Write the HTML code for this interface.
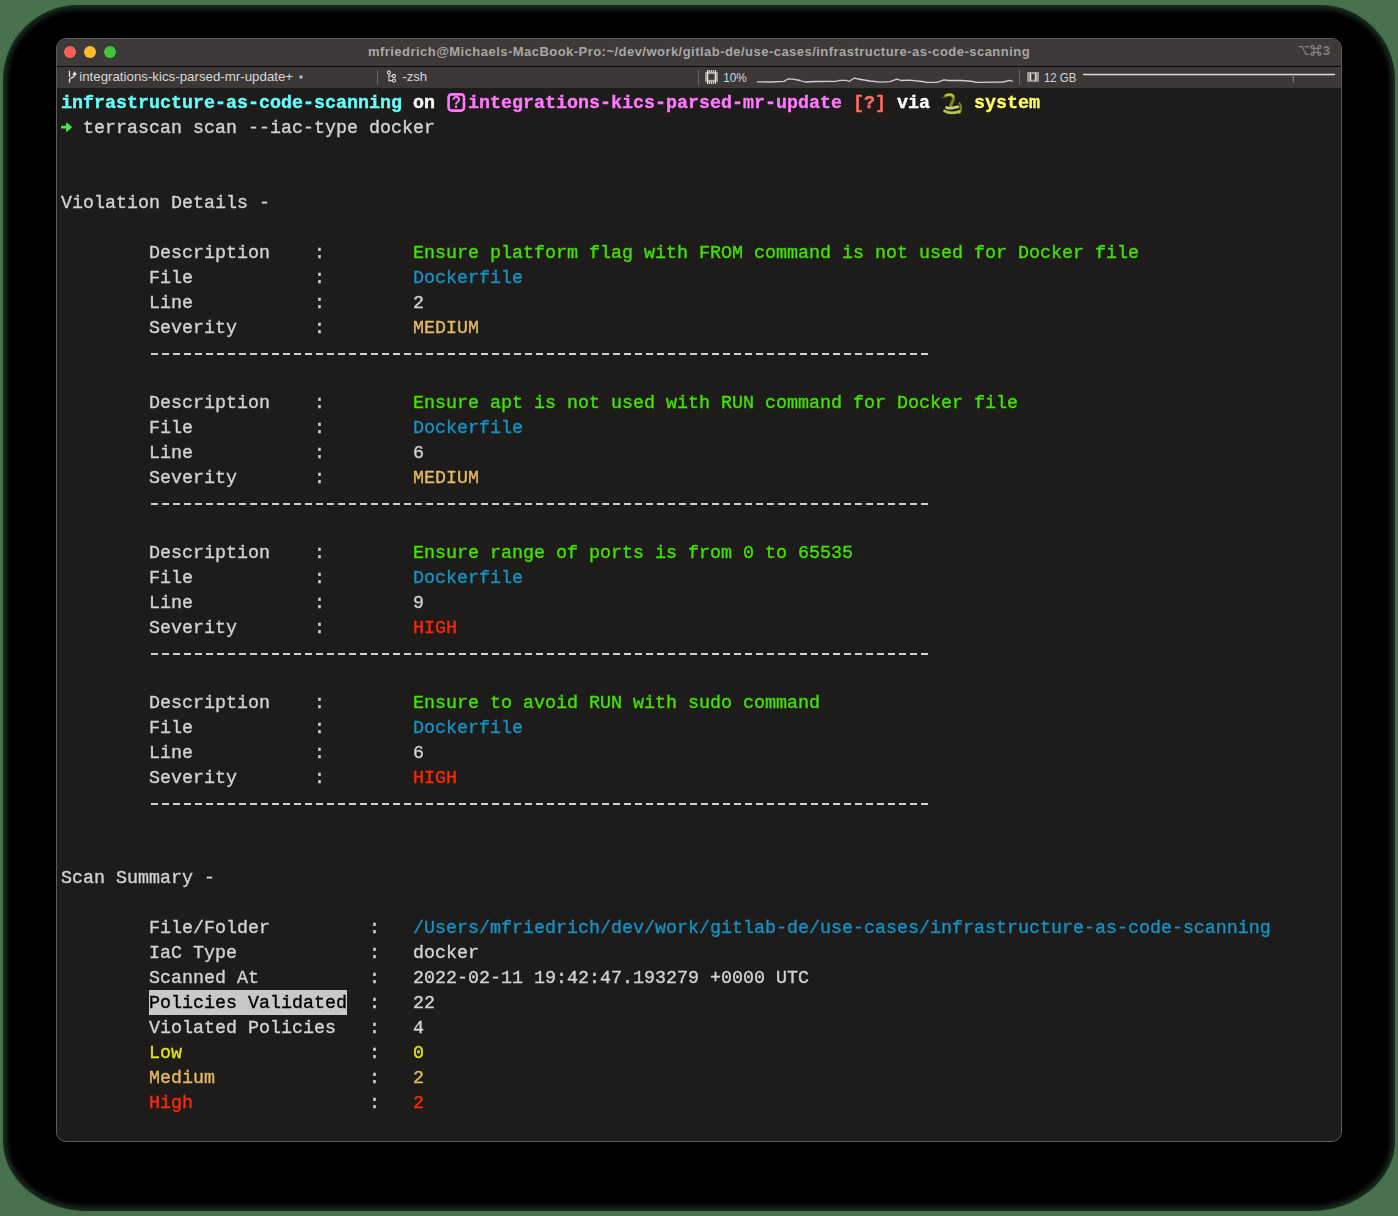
<!DOCTYPE html>
<html><head><meta charset="utf-8">
<style>
html,body{margin:0;padding:0;}
body{width:1398px;height:1216px;overflow:hidden;background:#48724e;position:relative;font-family:"Liberation Sans",sans-serif;}
#shadow{position:absolute;left:3px;top:5px;width:1392px;height:1206px;border-radius:75px 75px 85px 85px / 75px 75px 70px 70px;background:rgba(0,0,0,0.6);}
#shadow2{position:absolute;left:7px;top:9px;width:1384px;height:1198px;border-radius:71px 71px 81px 81px / 71px 71px 66px 66px;background:#000;filter:blur(2.5px);}
#win{position:absolute;left:56px;top:38px;width:1284px;height:1102px;border:1px solid #5e5c5b;border-radius:10px;overflow:hidden;background:#1e1c1b;}
#chrome{position:absolute;left:0;top:0;}
#term{position:absolute;left:4px;top:52px;width:1280px;}
.ln{position:absolute;left:0;height:25px;font-family:"Liberation Mono",monospace;font-size:18.3333px;line-height:25px;white-space:pre;color:#d2d2d2;transform-origin:0 17px;transform:scaleY(1.05);-webkit-text-stroke:0.35px currentColor;}
.c{color:#64fffa}.wh{color:#ffffff}.p{color:#ff78ff}.rd{color:#ff6a64}.y{color:#ffff64}
.g{color:#44e000}.b{color:#1492c4}.o{color:#e4b95f}.r{color:#ff2800}.yl{color:#e6e600}
.hl{color:#000}
.dash{position:absolute;left:88px;width:781px;height:2px;background:repeating-linear-gradient(to right,transparent 0 2px,#cfcfcf 2px 9px,transparent 9px 11px);}
#hlbg{position:absolute;left:92px;top:951px;width:198px;height:25px;background:#c8c8c8;}
.ico{display:inline-block;width:22px;height:25px;vertical-align:top;}
.ico1{display:inline-block;width:11px;height:25px;vertical-align:top;}
.ico svg,.ico1 svg{display:block;}
</style></head><body>
<div id="shadow"></div><div id="shadow2"></div>
<div id="win">
<svg id="chrome" width="1284" height="49" viewBox="0 0 1284 49">
  <rect x="0" y="0" width="1284" height="27" fill="#3d3a39"/>
  <rect x="0" y="27" width="1284" height="1" fill="#0b0b0b"/>
  <rect x="0" y="28" width="1284" height="21" fill="#3b3837"/>
  <circle cx="13" cy="13" r="6" fill="#fd5f57"/>
  <circle cx="33" cy="13" r="6" fill="#febb2e"/>
  <circle cx="53" cy="13" r="6" fill="#3ec53e"/>
  <text x="642" y="16.8" text-anchor="middle" font-family="Liberation Sans" font-weight="bold" font-size="13" letter-spacing="0.465" fill="#a9a7a6">mfriedrich@Michaels-MacBook-Pro:~/dev/work/gitlab-de/use-cases/infrastructure-as-code-scanning</text>
  <g fill="none" stroke="#82807f" stroke-width="1.3">
    <path d="M1241.6 7.6 H1245.3 L1248.9 15.4 H1252.2 M1247.6 7.6 H1252.2"/>
    <path d="M1256.90 9.35 H1261.10 V13.55 H1256.90 Z M1256.90 9.35 V7.90 A1.45 1.45 0 1 0 1255.45 9.35 H1256.90 M1256.90 13.55 V15.00 A1.45 1.45 0 1 1 1255.45 13.55 H1256.90 M1261.10 9.35 V7.90 A1.45 1.45 0 1 1 1262.55 9.35 H1261.10 M1261.10 13.55 V15.00 A1.45 1.45 0 1 0 1262.55 13.55 H1261.10"/>
  </g>
  <text x="1265.8" y="16" font-family="Liberation Sans" font-weight="bold" font-size="13" fill="#82807f">3</text>

  <path d="M12.5 31.8 V37.9" stroke="#e6e4e3" stroke-width="1.3"/>
  <path d="M12.5 43.8 V40.5 C12.5 38.6 17.6 39 17.6 36 V34.8" fill="none" stroke="#e6e4e3" stroke-width="1.3"/>
  <path d="M17.6 32.4 L19.6 35.8 L15.6 35.8 Z" fill="#e6e4e3" stroke="#e6e4e3" stroke-width="0.5" stroke-linejoin="round"/>
  <g fill="none" stroke="#dcdad9" stroke-width="1.1">
    <path d="M331.9 34.8 V41.6 H335"/><path d="M331.9 37 H335"/>
    <circle cx="331.9" cy="33.4" r="1.5"/><circle cx="336.9" cy="37" r="1.6"/><circle cx="336.9" cy="41.6" r="1.6"/>
  </g>
  <rect x="648" y="33" width="13" height="9.8" fill="#9b9997"/>
  <rect x="650" y="33.5" width="9" height="9" fill="#b5b3b1"/>
  <rect x="651.2" y="34.9" width="6.5" height="5.9" fill="#3d3a39"/>
  <g fill="#e6e4e3"><rect x="649.9" y="31" width="1.2" height="14"/><rect x="657.9" y="31" width="1.2" height="14"/>
  <rect x="651.8" y="31" width="1.1" height="2.4"/><rect x="653.8" y="31" width="1.1" height="2.4"/><rect x="655.8" y="31" width="1.1" height="2.4"/>
  <rect x="651.8" y="42.6" width="1.1" height="2.4"/><rect x="653.8" y="42.6" width="1.1" height="2.4"/><rect x="655.8" y="42.6" width="1.1" height="2.4"/></g>
  <rect x="970" y="33" width="12" height="9.9" fill="#9b9997"/>
  <rect x="974.4" y="35" width="3.3" height="5.8" fill="#3d3a39"/>
  <g fill="#e6e4e3"><rect x="972.9" y="34" width="1.1" height="7.7"/><rect x="978" y="34" width="1.1" height="7.7"/></g>
  <!-- tab 1 -->
  <text x="22.2" y="42.1" font-family="Liberation Sans" font-size="13.3" fill="#d9d7d6">integrations-kics-parsed-mr-update+</text>
  <circle cx="244" cy="38" r="1.8" fill="#b9b7b6"/>
  <rect x="320" y="31" width="1" height="15" fill="#6a6867"/>
  <text x="345.5" y="42" font-family="Liberation Sans" font-size="13" fill="#d9d7d6">-zsh</text>
  <rect x="641" y="31" width="1" height="15" fill="#6a6867"/>
  <text x="666.3" y="43" font-family="Liberation Sans" font-size="13.4" textLength="23.5" lengthAdjust="spacingAndGlyphs" fill="#d9d7d6">10%</text>
  <path d="M700.0 42.8 L713.0 43.0 L727.0 42.4 L731.0 40.0 L736.0 40.2 L743.0 41.5 L748.0 43.0 L758.0 42.5 L779.0 42.4 L783.0 41.3 L789.0 41.4 L792.0 42.5 L797.0 39.2 L804.0 40.5 L813.0 42.0 L823.0 43.2 L833.0 42.6 L840.0 40.2 L844.0 41.5 L852.0 41.2 L865.0 42.5 L870.0 43.4 L880.0 43.3 L887.0 40.8 L892.0 41.5 L905.0 41.5 L916.0 42.5 L919.0 43.3 L946.0 43.0 L953.0 41.3 L956.0 42.5" fill="none" stroke="#d0cecd" stroke-width="1.3" stroke-linejoin="round"/>
  <rect x="962" y="31" width="1" height="15" fill="#6a6867"/>
  <text x="987" y="43" font-family="Liberation Sans" font-size="13.4" textLength="32.3" lengthAdjust="spacingAndGlyphs" fill="#d9d7d6">12 GB</text>
  <path d="M1026 35.4 L1278 35.4" stroke="#e0dedd" stroke-width="1.5"/>
  <path d="M1236.3 35.4 L1236.3 43.4" stroke="#8a8887" stroke-width="1"/>
</svg>
<div id="hlbg"></div>
<div id="term">
<div class="dash" style="top:261.5px"></div><div class="dash" style="top:411.5px"></div><div class="dash" style="top:561.5px"></div><div class="dash" style="top:711.5px"></div><div class="ln" style="top:0px"><b><span class="c">infrastructure-as-code-scanning</span> <span class="wh">on</span> <span class="p"><span class="ico"><svg width="22" height="25" viewBox="0 0 22 25"><rect x="2.6" y="4" width="15.4" height="15.4" rx="2.8" fill="none" stroke="#ff78ff" stroke-width="2.6"/><text x="10.3" y="17.3" text-anchor="middle" font-family="Liberation Sans" font-weight="bold" font-size="15" fill="#ff78ff">?</text></svg></span>integrations-kics-parsed-mr-update</span> <span class="rd">[?]</span> <span class="wh">via</span> <span class="ico"><svg width="22" height="25" viewBox="0 -1 22 25"><path d="M1 6 L4 5.5" stroke="#6a5a6a" stroke-width="1"/><path d="M4.5 4.5 C8 2.5 13 3 12.5 7 C12 10 9.5 12 9.5 15" fill="none" stroke="#7d8c1a" stroke-width="3" stroke-linecap="round"/><path d="M5 4 C8 2.8 11 3 12 5" fill="none" stroke="#c8d050" stroke-width="1.4" stroke-linecap="round"/><path d="M18.5 11.5 C20.5 13.5 20.5 18 18.5 20.5" fill="none" stroke="#6f8020" stroke-width="2.2" stroke-linecap="round"/><path d="M5.5 15.5 C9 17.5 13 15.2 17 15" fill="none" stroke="#c8d660" stroke-width="2.6" stroke-linecap="round"/><path d="M3.5 18.8 C8 21.5 13 21.2 18.5 19.2" fill="none" stroke="#b7c850" stroke-width="2.6" stroke-linecap="round"/></svg></span> <span class="y">system</span></b></div>
<div class="ln" style="top:25px"><span class="ico1"><svg width="11" height="25" viewBox="0 0 11 25"><path d="M1 11.5 H7" stroke="#4ee34e" stroke-width="2.6" stroke-linecap="round"/><path d="M5.8 8 L10 11.5 L5.8 15 Z" fill="#4ee34e" stroke="#4ee34e" stroke-width="1.6" stroke-linejoin="round"/></svg></span> terrascan scan --iac-type docker</div>
<div class="ln" style="top:100px">Violation Details -</div>
<div class="ln" style="top:150px">        Description    :        <span class="g">Ensure platform flag with FROM command is not used for Docker file</span></div>
<div class="ln" style="top:175px">        File           :        <span class="b">Dockerfile</span></div>
<div class="ln" style="top:200px">        Line           :        2</div>
<div class="ln" style="top:225px">        Severity       :        <span class="o">MEDIUM</span></div>
<div class="ln" style="top:300px">        Description    :        <span class="g">Ensure apt is not used with RUN command for Docker file</span></div>
<div class="ln" style="top:325px">        File           :        <span class="b">Dockerfile</span></div>
<div class="ln" style="top:350px">        Line           :        6</div>
<div class="ln" style="top:375px">        Severity       :        <span class="o">MEDIUM</span></div>
<div class="ln" style="top:450px">        Description    :        <span class="g">Ensure range of ports is from 0 to 65535</span></div>
<div class="ln" style="top:475px">        File           :        <span class="b">Dockerfile</span></div>
<div class="ln" style="top:500px">        Line           :        9</div>
<div class="ln" style="top:525px">        Severity       :        <span class="r">HIGH</span></div>
<div class="ln" style="top:600px">        Description    :        <span class="g">Ensure to avoid RUN with sudo command</span></div>
<div class="ln" style="top:625px">        File           :        <span class="b">Dockerfile</span></div>
<div class="ln" style="top:650px">        Line           :        6</div>
<div class="ln" style="top:675px">        Severity       :        <span class="r">HIGH</span></div>
<div class="ln" style="top:775px">Scan Summary -</div>
<div class="ln" style="top:825px">        File/Folder         :   <span class="b">/Users/mfriedrich/dev/work/gitlab-de/use-cases/infrastructure-as-code-scanning</span></div>
<div class="ln" style="top:850px">        IaC Type            :   docker</div>
<div class="ln" style="top:875px">        Scanned At          :   2022-02-11 19:42:47.193279 +0000 UTC</div>
<div class="ln" style="top:900px">        <span class="hl">Policies Validated</span>  :   22</div>
<div class="ln" style="top:925px">        Violated Policies   :   4</div>
<div class="ln" style="top:950px">        <span class="yl">Low</span>                 :   <span class="yl">0</span></div>
<div class="ln" style="top:975px">        <span class="o">Medium</span>              :   <span class="o">2</span></div>
<div class="ln" style="top:1000px">        <span class="r">High</span>                :   <span class="r">2</span></div>
</div>
</div>
</body></html>
